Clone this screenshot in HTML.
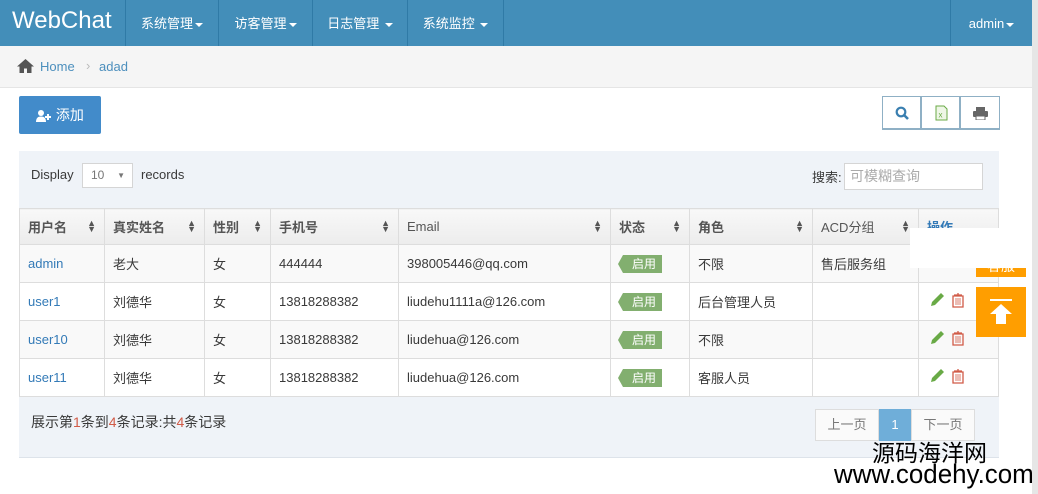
<!DOCTYPE html>
<html><head><meta charset="utf-8"><style>
*{box-sizing:border-box;margin:0;padding:0}
body{width:1038px;height:494px;overflow:hidden;background:#fff;font-family:"Liberation Sans","Noto Sans CJK SC",sans-serif;font-size:13px;color:#393939;position:relative}
.abs{position:absolute}
.nav{left:0;top:0;width:1032px;height:46px;background:#438eb9;color:#fff}
.brand{left:12px;top:7px;font-size:24px;color:#fff}
.ni{top:0;height:46px;border-left:1px solid #2f7aa6;color:#fff;font-size:13px;line-height:47px;text-align:center}
.car{display:inline-block;width:0;height:0;border-left:4px solid transparent;border-right:4px solid transparent;border-top:4px solid #fff;vertical-align:middle;margin-left:2px}
.sb{left:1032px;top:0;width:6px;height:494px;background:#e6e6e6}
.bc{left:0;top:46px;width:1032px;height:42px;background:#f5f5f5;border-bottom:1px solid #e5e5e5}
.btn{left:19px;top:96px;width:82px;height:38px;background:#428bca;border-radius:2px;color:#fff;font-size:14px;line-height:38px;text-align:center}
.tb{top:96px;width:39px;height:34px;border:1px solid #8fb0c5;border-bottom-width:2px;background:#fff}
.panel{left:19px;top:151px;width:980px;height:307px;background:#eff3f8;border-bottom:1px solid #dde3ea}
table{position:absolute;left:19px;top:208px;border-collapse:collapse;width:980px}
td,th{border:1px solid #ddd;padding:0 8px;height:38px;text-align:left;font-weight:normal;white-space:nowrap}
th{height:36px;background:linear-gradient(#f8f8f8,#ececec);color:#555;font-weight:bold;font-size:13px;position:relative}
th .s{position:absolute;right:8px;top:11px;font-size:9px;line-height:6px;color:#555}
tr.g td{background:#f9f9f9}
tr.w td{background:#fff}
a{color:#337ab7;text-decoration:none}
.tag{display:inline-block;background:#82af6f;color:#fff;font-size:12px;line-height:18px;padding:0 6px 0 9px;position:relative;margin-left:4px}
.tag:before{content:"";position:absolute;left:-5px;top:0;border-top:9px solid transparent;border-bottom:9px solid transparent;border-right:5px solid #82af6f}
.pg{top:409px;height:32px;border:1px solid #ddd;background:#fafafa;color:#777;line-height:30px;text-align:center}
.or{background:#ff9e00;color:#fff}
</style></head><body>
<div class="abs nav">
<div class="abs brand">WebChat</div>
<div class="abs ni" style="left:125px;width:93px">系统管理<span class="car"></span></div>
<div class="abs ni" style="left:218px;width:94px">访客管理<span class="car"></span></div>
<div class="abs ni" style="left:312px;width:95px">日志管理 <span class="car"></span></div>
<div class="abs ni" style="left:407px;width:97px;border-right:1px solid #2f7aa6">系统监控 <span class="car"></span></div>
<div class="abs ni" style="left:950px;width:82px">admin<span class="car"></span></div>
</div>
<div class="abs sb"></div>
<div class="abs bc">
<svg class="abs" style="left:17px;top:13px" width="17" height="14" viewBox="0 0 17 14"><path d="M8.5 0L0 7.5h2.5V14h4.5V9.5h3V14h4.5V7.5H17z" fill="#555"/></svg>
<span class="abs" style="left:40px;top:13px;color:#4c8fbd;font-size:13px">Home</span>
<span class="abs" style="left:86px;top:12px;color:#bbb">›</span>
<span class="abs" style="left:99px;top:13px;color:#4c8fbd">adad</span>
</div>
<div class="abs btn"><svg style="vertical-align:-2px" width="16" height="12" viewBox="0 0 16 12"><circle cx="5" cy="3" r="3" fill="#fff"/><path d="M0 12c0-4 2-5.5 5-5.5s5 1.5 5 5.5z" fill="#fff"/><path d="M12 4v6M9 7h6" stroke="#fff" stroke-width="2"/></svg> 添加</div>
<div class="abs tb" style="left:882px"><svg class="abs" style="left:12px;top:9px" width="14" height="14" viewBox="0 0 14 14"><circle cx="6" cy="6" r="4.3" fill="none" stroke="#3a7fb0" stroke-width="2.2"/><path d="M9 9l4 4" stroke="#3a7fb0" stroke-width="2.6"/></svg></div>
<div class="abs tb" style="left:921px"><svg class="abs" style="left:13px;top:8px" width="13" height="16" viewBox="0 0 13 16"><path d="M1 1h8l3 3v11H1z" fill="#eef6e6" stroke="#69aa46"/><text x="3.5" y="12.5" font-size="8" fill="#69aa46" font-family="Liberation Sans">x</text></svg></div>
<div class="abs tb" style="left:960px;width:40px"><svg class="abs" style="left:12px;top:10px" width="15" height="13" viewBox="0 0 15 13"><rect x="3" y="0" width="9" height="4" fill="#666"/><rect x="0" y="4" width="15" height="6" rx="1" fill="#666"/><rect x="3" y="9" width="9" height="4" fill="#fff" stroke="#666"/></svg></div>
<div class="abs panel"></div>
<span class="abs" style="left:31px;top:167px">Display</span>
<div class="abs" style="left:82px;top:163px;width:51px;height:25px;border:1px solid #d5d5d5;background:#fff;font-size:12px;color:#777;line-height:23px;padding-left:8px">10<span style="position:absolute;right:7px;font-size:8px">▼</span></div>
<span class="abs" style="left:141px;top:167px">records</span>
<span class="abs" style="left:812px;top:167px">搜索:</span>
<div class="abs" style="left:844px;top:163px;width:139px;height:27px;border:1px solid #d5d5d5;background:#fff;color:#aaa;font-size:14px;line-height:25px;padding-left:5px">可模糊查询</div>
<table>
<tr><th style="width:85px">用户名<span class="s">▲<br>▼</span></th><th style="width:100px">真实姓名<span class="s">▲<br>▼</span></th><th style="width:66px">性别<span class="s">▲<br>▼</span></th><th style="width:128px">手机号<span class="s">▲<br>▼</span></th><th style="width:212px;font-weight:normal">Email<span class="s">▲<br>▼</span></th><th style="width:79px">状态<span class="s">▲<br>▼</span></th><th style="width:123px">角色<span class="s">▲<br>▼</span></th><th style="width:106px;font-weight:normal">ACD分组<span class="s">▲<br>▼</span></th><th style="color:#337ab7">操作</th></tr>
<tr class="g"><td><a>admin</a></td><td>老大</td><td>女</td><td>444444</td><td>398005446@qq.com</td><td><span class="tag">启用</span></td><td>不限</td><td>售后服务组</td><td></td></tr>
<tr class="w"><td><a>user1</a></td><td>刘德华</td><td>女</td><td>13818288382</td><td>liudehu1111a@126.com</td><td><span class="tag">启用</span></td><td>后台管理人员</td><td></td><td></td></tr>
<tr class="g"><td><a>user10</a></td><td>刘德华</td><td>女</td><td>13818288382</td><td>liudehua@126.com</td><td><span class="tag">启用</span></td><td>不限</td><td></td><td></td></tr>
<tr class="w"><td><a>user11</a></td><td>刘德华</td><td>女</td><td>13818288382</td><td>liudehua@126.com</td><td><span class="tag">启用</span></td><td>客服人员</td><td></td><td></td></tr>
</table>
<svg class="abs" style="left:929px;top:292px" width="40" height="96" viewBox="0 0 40 96">
<g id="r"><path d="M2 14l1-4 9-9 3 3-9 9z" fill="#69aa46"/><path d="M25 3h8M29 1v2M24 4h10v11H24z" fill="none" stroke="#d15b47" stroke-width="1.3"/><path d="M27 6v7M29 6v7M31 6v7" stroke="#d15b47" stroke-width="0.8"/></g>
<use href="#r" y="38"/><use href="#r" y="76"/>
</svg>
<span class="abs" style="left:31px;top:412px;font-size:14px">展示第<span style="color:#d15b47">1</span>条到<span style="color:#d15b47">4</span>条记录:共<span style="color:#d15b47">4</span>条记录</span>
<div class="abs pg" style="left:815px;width:64px">上一页</div>
<div class="abs pg" style="left:879px;width:32px;background:#6faed9;border-color:#6faed9;color:#fff">1</div>
<div class="abs pg" style="left:911px;width:64px">下一页</div>
<div class="abs or" style="left:976px;top:248px;width:50px;height:29px;overflow:hidden;font-size:14px;text-align:center;line-height:36px">客服</div>
<div class="abs" style="left:910px;top:228px;width:122px;height:40px;background:#fff"></div>
<div class="abs or" style="left:976px;top:287px;width:50px;height:50px"><div class="abs" style="left:14px;top:12px;width:22px;height:2px;background:#fff"></div><svg class="abs" style="left:14px;top:17px" width="22" height="20" viewBox="0 0 22 20"><path d="M11 0L0 10h6v10h10V10h6z" fill="#fff"/></svg></div>
<div class="abs" style="left:872px;top:437px;font-size:23px;color:#000;font-family:'Noto Sans CJK SC',sans-serif;line-height:28px">源码海洋网</div>
<div class="abs" style="left:834px;top:458px;font-size:27px;color:#000;line-height:32px;transform:scaleX(0.96);transform-origin:left">www.codehy.com</div>
</body></html>
